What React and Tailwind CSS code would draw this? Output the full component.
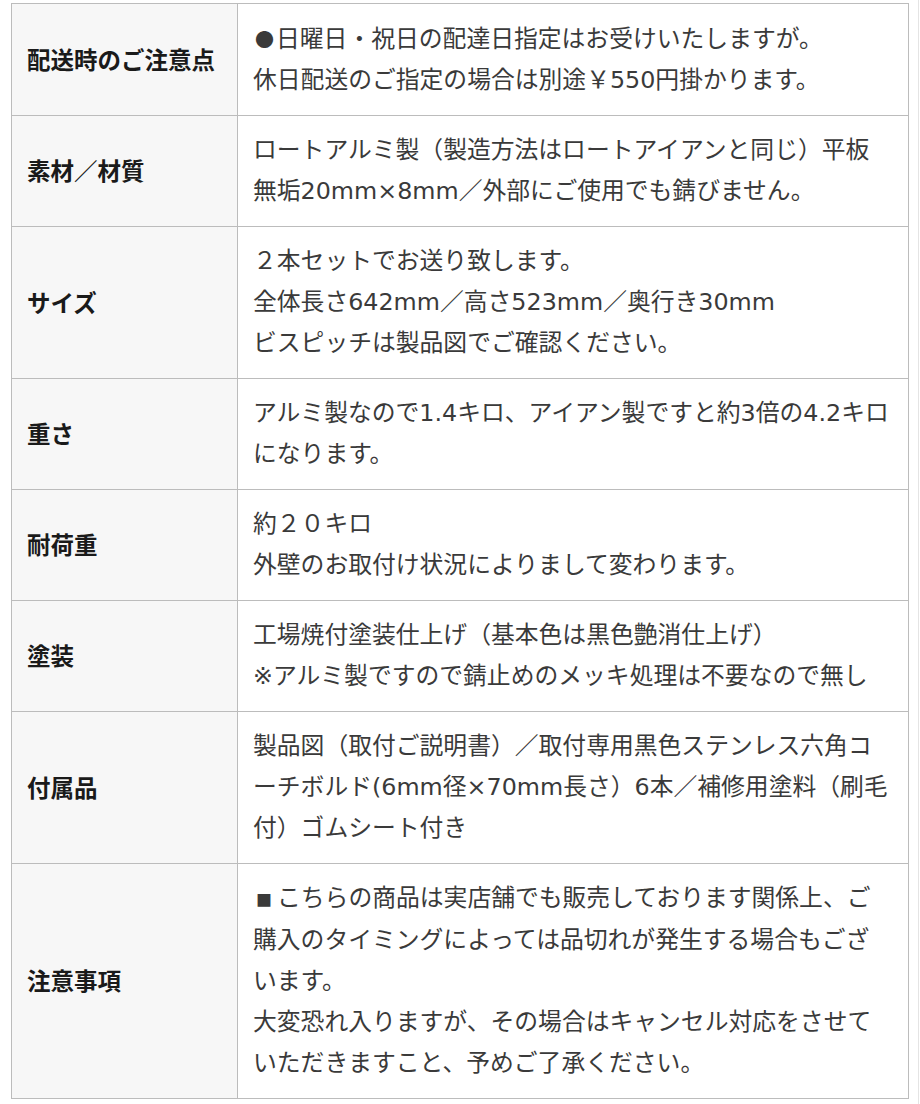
const rows = [
  {
    label: "配送時のご注意点",
    lines: [
      <>
        <span className="ml-[2px] mr-[2px] font-['Noto_Sans_CJK_JP',sans-serif] text-[19px]">●</span>
        日曜日・祝日の配達日指定はお受けいたしますが。
      </>,
      "休日配送のご指定の場合は別途￥550円掛かります。",
    ],
  },
  {
    label: "素材／材質",
    lines: ["ロートアルミ製（製造方法はロートアイアンと同じ）平板", "無垢20mm×8mm／外部にご使用でも錆びません。"],
  },
  {
    label: "サイズ",
    lines: ["２本セットでお送り致します。", "全体長さ642mm／高さ523mm／奥行き30mm", "ビスピッチは製品図でご確認ください。"],
  },
  {
    label: "重さ",
    lines: ["アルミ製なので1.4キロ、アイアン製ですと約3倍の4.2キロ", "になります。"],
  },
  {
    label: "耐荷重",
    lines: ["約２０キロ", "外壁のお取付け状況によりまして変わります。"],
  },
  {
    label: "塗装",
    lines: ["工場焼付塗装仕上げ（基本色は黒色艶消仕上げ）", "※アルミ製ですので錆止めのメッキ処理は不要なので無し"],
  },
  {
    label: "付属品",
    lines: [
      "製品図（取付ご説明書）／取付専用黒色ステンレス六角コ",
      "ーチボルド(6mm径×70mm長さ）6本／補修用塗料（刷毛",
      "付）ゴムシート付き",
    ],
  },
  {
    label: "注意事項",
    lines: [
      <>
        <span className="ml-[3px] mr-[5px] font-['Noto_Sans_CJK_JP',sans-serif] text-[16px]">■</span>
        こちらの商品は実店舗でも販売しております関係上、ご
      </>,
      "購入のタイミングによっては品切れが発生する場合もござ",
      "います。",
      "大変恐れ入りますが、その場合はキャンセル対応をさせて",
      "いただきますこと、予めご了承ください。",
    ],
  },
];

export default function App() {
  return (
    <div className="min-h-[1104px] w-[919px] border-r border-[#e4e4e4] bg-white pt-[3px] pl-[11px]">
      <table className="w-[898px] table-fixed border-collapse">
        <colgroup>
          <col className="w-[226px]" />
          <col />
        </colgroup>
        <tbody>
          {rows.map((row) => (
            <tr key={row.label}>
              <th className="border border-[#bcbcbc] bg-[#f7f7f7] px-[15px] text-left align-middle font-['Noto_Sans_CJK_JP',sans-serif] text-[23.5px] font-bold text-[#1a1a1a]">
                {row.label}
              </th>
              <td className="border border-[#bcbcbc] bg-white py-[14px] pl-[15px] pr-[4px] align-middle font-['DejaVu_Sans','Noto_Sans_CJK_JP',sans-serif] text-[23.8px] leading-[41px] text-[#3a3a3a]">
                {row.lines.map((line, i) => (
                  <div key={i} className="whitespace-nowrap">
                    {line}
                  </div>
                ))}
              </td>
            </tr>
          ))}
        </tbody>
      </table>
    </div>
  );
}
